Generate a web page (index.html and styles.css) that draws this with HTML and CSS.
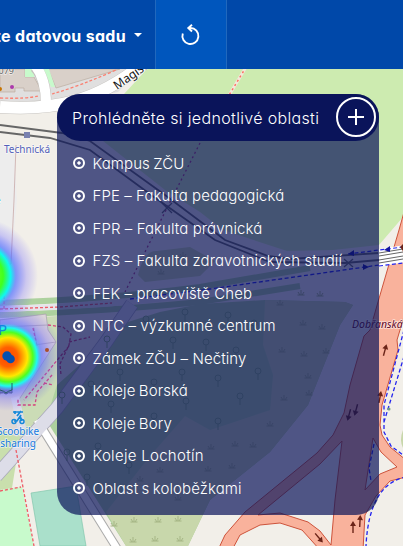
FILE: index.html
```html
<!DOCTYPE html>
<html lang="cs">
<head>
<meta charset="utf-8">
<title>Mapa oblastí</title>
<link rel="stylesheet" href="styles.css">
</head>
<body>
<svg class="map" viewBox="0 0 403 546" width="403" height="546" aria-hidden="true">
  <defs>
    <radialGradient id="heat">
      <stop offset="0" stop-color="#ff4500"/><stop offset=".18" stop-color="#ff6000"/>
      <stop offset=".36" stop-color="#ffe800"/><stop offset=".46" stop-color="#50ff20"/>
      <stop offset=".54" stop-color="#20f8f0"/><stop offset=".62" stop-color="#5a70ff" stop-opacity=".65"/>
      <stop offset=".78" stop-color="#5a50ff" stop-opacity=".28"/>
      <stop offset="1" stop-color="#5040ff" stop-opacity="0"/>
    </radialGradient>
    <radialGradient id="cool">
      <stop offset="0" stop-color="#d0ff00"/><stop offset=".4" stop-color="#40ff20"/>
      <stop offset=".53" stop-color="#10f8f0"/><stop offset=".62" stop-color="#5070ff" stop-opacity=".7"/>
      <stop offset=".8" stop-color="#5a50ff" stop-opacity=".25"/>
      <stop offset="1" stop-color="#5040ff" stop-opacity="0"/>
    </radialGradient>
    <g id="tree" fill="none" stroke="#87ad78"><circle r="3"/><path d="M0 3v6"/></g>
    <path id="bush" d="M-3.500 2h7M0 2v-5M-1 2l-2-3M1 2l2-3" fill="none" stroke="#a5b584"/>
    <g id="dir"><path d="M0 6V-2" stroke="#6b2418" stroke-width="1.400"/><path d="M-3-1L0-6L3-1Z" fill="#6b2418"/></g>
  </defs>
  <rect width="403" height="546" fill="#f2efe9"/>
  <path d="M0 69H140L118 92L60 104L0 104Z" fill="#e0dfdf"/>
  <path d="M0 69H25V77H34L40 88L40 91H24V88H15V92H0ZM48 69H120L56 88Z" fill="#d9d0c9" stroke="#bcada1" stroke-width=".7"/>
  <path d="M25 69H34V77H25ZM43 69H49L55 87L51 87Z" fill="#c8facc"/>
  <path d="M0 107Q42 110 75 101T142 65" fill="none" stroke="#c4c1bd" stroke-width="13"/>
  <path d="M35 67Q46 79 46 104" fill="none" stroke="#c4c1bd" stroke-width="11"/>
  <path d="M0 107Q42 110 75 101T142 65" fill="none" stroke="#fff" stroke-width="12"/>
  <path d="M35 65Q46 79 46 104" fill="none" stroke="#fff" stroke-width="10"/>
  <path d="M0 98Q27 99 38 96M52 94Q80 86 116 70" fill="none" stroke="#fa8072" stroke-width="1.300" stroke-dasharray="3 2"/>
  <path d="M147 69H403V217L379 245L333 250L287 251L223 230L200 212L165 190L103 141L124 94Z" fill="#cdebb0"/>
  <path d="M246 67L228 97" fill="none" stroke="#f3e8da" stroke-width="3"/>
  <path d="M246 67L228 97" fill="none" stroke="#fa7060" stroke-width="1.500" stroke-dasharray="2 3"/>
  <path d="M200 143L167 208L125 292" fill="none" stroke="#b04080" stroke-width="1.300" stroke-dasharray="2 3"/>
  <path d="M0 145L14 145L17 200L11 264L0 266Z" fill="#ededed"/>
  <path d="M16 145L14 200L11 264H6V258H0" fill="none" stroke="#c9aaa8" stroke-width=".8"/>

  <path d="M138 275Q144 250 157 251L190 247L215 261L200 276L145 282Z" fill="#c8d7ab"/>
  <path d="M0 303Q110 299 200 287L310 268M0 315Q110 311 200 302L300 286" fill="none" stroke="#add19e" stroke-width="6"/>
  <path d="M0 309Q100 307 200 294" fill="none" stroke="#e6e4ea" stroke-width="6"/>
  <path d="M0 319L57 316V405L36 428L0 455Z" fill="#cbdcb6"/>
  <path d="M0 320L46 314L48 330L56 342L20 398L0 420Z" fill="#dcd5d8" stroke="#a99fae" stroke-width=".7"/>
  <path d="M0 327L48 325M27 346L56 342M34 328L37 346" fill="none" stroke="#a99fae" stroke-width=".7"/>
  <path d="M0 395L12 397L20 430L12 450L0 460Z" fill="#dcd7d5"/>
  <path d="M0 430L20 438L12 488L0 490Z" fill="#c9dfad"/>
  <path d="M128 322L160 312L200 304L265 300L345 302L353 305L340 325L308 405L270 452L210 500L188 546H126L46 420L57 385Z" fill="#add19e"/>
  <path d="M265 300L345 302L353 305L340 325L308 405L270 452L210 500L188 546H126L106 512L150 456L185 416L210 430L270 410L273 375L263 345Z" fill="#c8d7ab"/>
  <path d="M28 450L40 425L110 546H36L20 487Z" fill="#f2efe9"/>
  <path d="M-4 476L57 408L106 342L132 304" fill="none" stroke="#aaa9ba" stroke-width="14"/>
  <path d="M37 420L118 550" fill="none" stroke="#aaa" stroke-width="9"/>
  <path d="M37 420L118 550" fill="none" stroke="#fff" stroke-width="7"/>
  <path d="M-4 476L57 408L106 342L132 304" fill="none" stroke="#dddde8" stroke-width="12.500"/>
  <path d="M11 398L19 396L26 427L19 436Z" fill="#dddde8"/>
  <path d="M0 490L22 487L34 546H0Z" fill="#c8facc"/>
  <path d="M31 493L76 486L86 546H40Z" fill="#aae0cb" stroke="#83c7ad" stroke-width=".7"/>
  <g fill="none" stroke="#ee5c66" stroke-width="1.300" stroke-dasharray="3 2">
    <path d="M0 309L60 307L112 303M4 266V309M0 491L21 487M16 450L34 546"/>
    <path stroke="#d6457d" d="M33 328L37 346M48 325L63 327L71 334L69 345L60 364L61 375M69 342L90 337M69 346L24 400M52 375L37 392L35 405H18V398M44 383L53 385"/>
  </g>
  <g>
    <use href="#tree" x="107" y="339"/><use href="#tree" x="173" y="340"/><use href="#tree" x="120" y="372"/><use href="#tree" x="182" y="372"/><use href="#tree" x="91" y="384"/><use href="#tree" x="154" y="382"/><use href="#tree" x="62" y="395"/><use href="#tree" x="111" y="404"/><use href="#tree" x="186" y="401"/><use href="#tree" x="154" y="416"/><use href="#tree" x="67" y="452"/><use href="#tree" x="98" y="446"/><use href="#tree" x="87" y="477"/><use href="#tree" x="129" y="465"/><use href="#tree" x="146" y="319"/><use href="#tree" x="185" y="312"/><use href="#tree" x="228" y="315"/><use href="#tree" x="206" y="342"/><use href="#tree" x="236" y="350"/><use href="#tree" x="258" y="371"/><use href="#tree" x="218" y="378"/><use href="#tree" x="240" y="396"/><use href="#tree" x="218" y="421"/><use href="#tree" x="254" y="323"/>
    <use href="#bush" x="280" y="303"/><use href="#bush" x="303" y="323"/><use href="#bush" x="322" y="327"/><use href="#bush" x="282" y="350"/><use href="#bush" x="304" y="354"/><use href="#bush" x="326" y="351"/><use href="#bush" x="308" y="376"/><use href="#bush" x="284" y="398"/><use href="#bush" x="309" y="393"/><use href="#bush" x="270" y="424"/><use href="#bush" x="235" y="444"/><use href="#bush" x="253" y="445"/><use href="#bush" x="211" y="447"/><use href="#bush" x="232" y="466"/><use href="#bush" x="208" y="469"/><use href="#bush" x="160" y="470"/><use href="#bush" x="140" y="479"/><use href="#bush" x="178" y="498"/><use href="#bush" x="134" y="520"/><use href="#bush" x="158" y="520"/><use href="#bush" x="178" y="519"/><use href="#bush" x="114" y="524"/><use href="#bush" x="133" y="540"/><use href="#bush" x="155" y="539"/><use href="#bush" x="180" y="539"/><use href="#bush" x="161" y="272"/><use href="#bush" x="183" y="255"/><use href="#bush" x="301" y="293"/><use href="#bush" x="320" y="294"/>
  </g>

  <path fill="#f9b29c" fill-rule="evenodd" stroke="#cd533b" stroke-width="1" d="M406 205L399 230L378 302L370 330L364 336L350 385L344 413L333 435L317 453L300 467L245 512L225 535L218 550H232L240 535L260 525L280 523L302 530L320 550H363L365 515L376 496L390 481L406 477V460L390 447L382 435L380 425L382 405L398 350L397 340L406 310ZM342 441L335 500L331 545L320 531L308 522L280 513L258 515L320 464ZM373 438L365 490L380 474L397 467L381 452Z"/>
  <g fill="none" stroke="#2424ee" stroke-width="1.300" stroke-dasharray="4 2.500">
    <path d="M404 330L384 405L384 432L391 446L403 455M406 350L384 422M374 444L369 468L371 481M406 477Q369 484 366 546M130 299L210 289L379 265"/>
  </g>
  <g fill="none" stroke="#666" stroke-width="1.800">
    <path d="M0 125L62 133L90 141L165 195L225 240L268 256L290 259L379 253M0 132L50 138L90 150L154 197L215 240L270 262L345 263L379 260"/>
    <path d="M162 203L172 213M172 203L162 213M344 259L353 267M353 259L344 267" stroke-width="1.300"/>
  </g>
  <path d="M379 258L403 254" stroke="#fff" stroke-width="17"/>
  <path d="M379 253L403 249M379 256L403 252M379 260L403 256M379 263L403 259" stroke="#666" stroke-width="1"/>
  <path d="M348 254L403 247M379 266L403 263" stroke="#2424ee" stroke-width="1.200" stroke-dasharray="4 2.500"/>
  <path d="M384 250l6-4v6ZM348 254l6-4v6ZM369 267l-6-3v6Z" fill="#1616a0"/>
  <path d="M400 247l3-3v7Z" fill="#6b2418"/>
  <use href="#dir" transform="translate(385 350) rotate(15)"/><use href="#dir" transform="translate(380 397) rotate(10)"/><use href="#dir" transform="translate(353 527)"/><use href="#dir" transform="translate(360 521) rotate(3)"/><use href="#dir" transform="translate(319 538) rotate(140)"/><use href="#dir" transform="translate(349 415) rotate(195)"/><use href="#dir" transform="translate(356 410) rotate(195)"/>
  <circle cx="389" cy="409" r="1.500" fill="#6f9f83"/><path d="M403 430Q399 440 403 448Z" fill="#c8d7ab"/>

  <path d="M0 383Q4 382 6 384Q8 382 12 383V393Q8 392 6 394Q4 392 0 393" fill="#555" fill-opacity=".6" stroke="#444"/>
  <circle cx="-20" cy="276" r="58" fill="url(#cool)"/>
  <circle cx="8" cy="357" r="54" fill="url(#heat)"/>
  <circle cx="7" cy="356" r="4.700" fill="#0750ae"/><circle cx="10.500" cy="359" r="4.300" fill="#0750ae"/>
  <path d="M0 390Q4 391 6 393Q8 391 12 390V383" fill="none" stroke="#285c68"/>
  <circle cx="47" cy="350" r="2" fill="#aa4f2b"/>
  <circle cx="12" cy="87" r="2" fill="#ac39ac"/><circle cx="0" cy="89" r="2" fill="#c77400"/>
  <rect x="24" y="132" width="6" height="6" fill="#7981b0"/>
  <g fill="none" stroke="#1488d8">
    <path d="M13 412H23M21 411L17 416M15 411V414M21 415L17 421H14M20 416L22 421" stroke-width="1.700"/>
    <circle cx="14" cy="421.500" r="2" stroke-width="1.500"/><circle cx="22" cy="421.500" r="2" stroke-width="1.500"/>
  </g>
  <g class="labels">
    <text x="27" y="153" class="place">Technická</text>
    <text x="14" y="74" text-anchor="end" class="number">1079</text>
    <text transform="translate(117 90) rotate(-35)" class="street">Magistrála</text>
    <text x="352" y="328" class="motorway">Dobřanská</text>
    <text x="18" y="435" class="poi">Scoobike</text><text x="18" y="447" class="poi">sharing</text>
    <text x="-2" y="335" class="parking">P</text>
    <text x="-5" y="204" class="parking-small">e</text>
  </g>
</svg>

<header class="topbar">
  <button class="dataset"><span>Vyberte datovou sadu</span><i class="caret"></i></button>
  <button class="reset" aria-label="Obnovit">
    <svg width="22" height="22" viewBox="0 0 22 22"><path d="M2.800 9.500A8 8 0 1 0 10.500 4H8.200" fill="none" stroke="#fff" stroke-width="1.900"/><path d="M12 .8L8.300 4L12 7.500" fill="none" stroke="#fff" stroke-width="1.900"/></svg>
  </button>
</header>

<aside class="panel">
  <div class="panel-head"><h2>Prohlédněte si jednotlivé oblasti</h2>
    <button class="plus" aria-label="Rozbalit"><svg width="16" height="16" viewBox="0 0 16 16"><path d="M8 0V16M0 8H16" stroke="#fff" stroke-width="2"/></svg></button>
  </div>
  <ul class="areas">
    <li class="tight"><i class="radio"></i><span>Kampus ZČU</span></li>
    <li><i class="radio"></i><span>FPE – Fakulta pedagogická</span></li>
    <li><i class="radio"></i><span>FPR – Fakulta právnická</span></li>
    <li><i class="radio"></i><span>FZS – Fakulta zdravotnických studií</span></li>
    <li><i class="radio"></i><span>FEK – pracoviště Cheb</span></li>
    <li><i class="radio"></i><span>NTC – výzkumné centrum</span></li>
    <li><i class="radio"></i><span>Zámek ZČU – Nečtiny</span></li>
    <li class="tight"><i class="radio"></i><span>Koleje Borská</span></li>
    <li class="tight"><i class="radio"></i><span>Koleje Bory</span></li>
    <li class="wide"><i class="radio"></i><span>Koleje Lochotín</span></li>
    <li class="tight"><i class="radio"></i><span>Oblast s koloběžkami</span></li>
  </ul>
</aside>
</body>
</html>
```
FILE: styles.css
```css
* { box-sizing: border-box; }
body {
  margin: 0;
  width: 403px;
  height: 546px;
  overflow: hidden;
  font-family: Inter, "Open Sans", sans-serif;
  font-feature-settings: "cv11";
  color: #fff;
}
button { border: 0; padding: 0; background: none; color: inherit; font: inherit; font-feature-settings: inherit; }
.map { position: absolute; inset: 0; z-index: -1; }
.labels { font-family: "Noto Sans", sans-serif; font-feature-settings: normal; paint-order: stroke; stroke: #fff; stroke-opacity: .6; stroke-width: 1.5px; }
.place { font-size: 10px; fill: #5360b8; text-anchor: middle; }
.number { font-size: 9px; fill: #666; }
.street { font-size: 12px; fill: #111; }
.motorway { font-size: 10.500px; font-style: italic; fill: #620728; }
.poi { font-size: 10px; fill: #1479df; text-anchor: middle; }
.parking { font-size: 15px; fill: #1285dd; stroke: none; }
.parking-small { font-size: 10px; fill: #1285dd; }

.topbar { display: flex; height: 69px; background: #0048a9; }
.dataset {
  width: 155px;
  display: flex;
  flex: none;
  justify-content: flex-end;
  align-items: center;
  gap: 8px;
  padding: 3px 13px 0 0;
  font-size: 16px;
  font-weight: 700;
  letter-spacing: .3px;
  white-space: nowrap;
}
.caret { border: 4px solid transparent; border-top-color: #fff; border-bottom: 0; margin-top: -2px; }
.reset {
  width: 72px;
  display: flex;
  align-items: center;
  justify-content: center;
  background: #0056bd;
  border: solid #2168bd;
  border-width: 0 1px;
}
.panel {
  width: 322px;
  height: 421px;
  margin: 25px 0 0 57px;
  border-radius: 23px;
  background: rgba(10, 20, 90, .7);
}
.panel-head {
  height: 47px;
  display: flex;
  align-items: center;
  justify-content: space-between;
  padding: 0 3px 1px 15px;
  border-radius: 24px;
  background: #0a145a;
}
.panel-head h2 { margin: 0; padding-top: 2px; font-size: 16px; font-weight: 300; white-space: nowrap; letter-spacing: .34px; }
.plus { width: 40px; height: 40px; border: 2px solid #fff; border-radius: 50%; display: flex; align-items: center; justify-content: center; }
.areas { list-style: none; margin: 6px 0 0; padding: 0 0 0 16px; }
.areas li { display: flex; align-items: center; height: 32.500px; gap: 7.500px; font-size: 15px; font-weight: 300; letter-spacing: .08px; white-space: nowrap; }
.areas .tight { word-spacing: -1px; letter-spacing: .1px; }
.areas .wide { letter-spacing: .3px; }
.radio { width: 12px; height: 12px; border: 2px solid #fff; border-radius: 50%; background: radial-gradient(circle, #fff 1.300px, transparent 2.100px); flex: none; }
```
